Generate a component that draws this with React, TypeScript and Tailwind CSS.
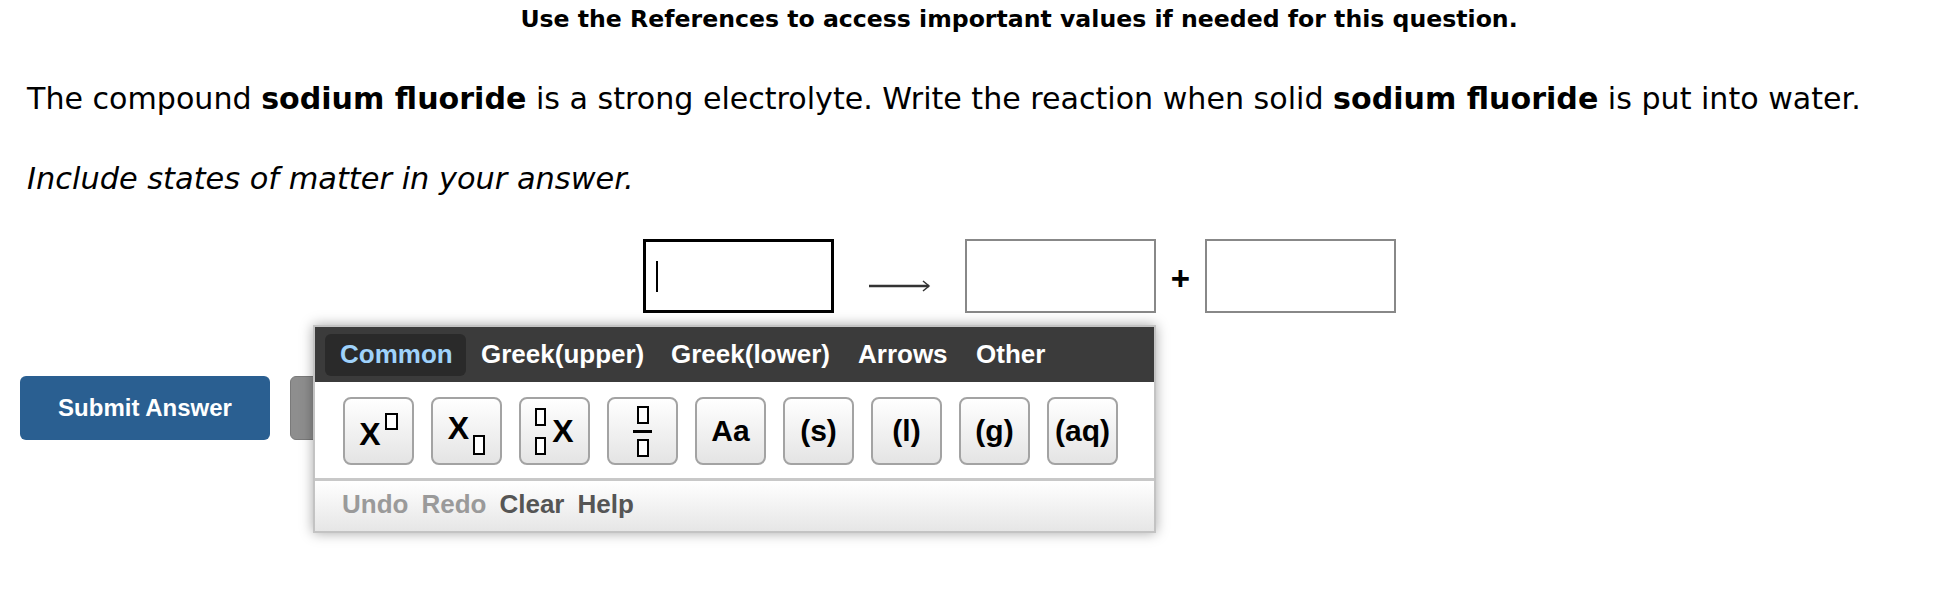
import React from "react";

function Box({ w = 12, h = 18 }: { w?: number; h?: number }) {
  return <span className="inline-block border-2 border-black bg-white" style={{ width: w, height: h }} />;
}

function PalBtn({ children }: { children: React.ReactNode }) {
  return (
    <div className="w-[71px] h-[68px] rounded-[8px] border-2 border-[#a3a3a3] bg-gradient-to-b from-white to-[#e4e4e4] flex items-center justify-center text-[30px] font-bold text-black leading-none">
      {children}
    </div>
  );
}

export default function App() {
  return (
    <div className="relative w-[1944px] h-[596px] bg-white overflow-hidden text-black">
      <div className="pt-[4px] pl-[94px] text-center font-['DejaVu_Sans',Verdana,sans-serif] font-bold text-[23.6px] leading-[30px]">
        Use the References to access important values if needed for this question.
      </div>
      <div className="mt-[45px] pl-[27px] font-['DejaVu_Sans',Verdana,sans-serif] text-[30.1px] leading-[40px] whitespace-nowrap">
        The compound <b>sodium fluoride</b> is a strong electrolyte. Write the reaction when solid <b>sodium fluoride</b> is put into water.
      </div>
      <div className="mt-[40px] pl-[27px] font-['DejaVu_Sans',Verdana,sans-serif] italic text-[30.4px] leading-[40px]">
        Include states of matter in your answer.
      </div>
      <div className="mt-[40px] pl-[643px] flex items-center">
        <div className="w-[191px] h-[74px] border-[3px] border-black flex items-center">
          <div className="ml-[10px] w-[2px] h-[31px] bg-black" />
        </div>
        <svg className="ml-[35px] mt-[20px]" width="62" height="14" viewBox="0 0 62 14">
          <line x1="0" y1="7" x2="60" y2="7" stroke="#333" strokeWidth="2.5" />
          <path d="M54 2 L60 7 L54 12" fill="none" stroke="#333" strokeWidth="1.5" />
        </svg>
        <div className="ml-[34px] w-[191px] h-[74px] border-2 border-[#888]" />
        <div className="w-[49px] mt-[4px] text-center font-['Liberation_Sans',Arial,sans-serif] font-bold text-[33px] leading-none">+</div>
        <div className="w-[191px] h-[74px] border-2 border-[#888]" />
      </div>
      <div className="mt-[63px] pl-[20px] flex gap-[20px] font-['Liberation_Sans',Arial,sans-serif]">
        <div className="w-[250px] h-[64px] rounded-[6px] bg-[#2a5f91] flex items-center justify-center text-white font-bold text-[24px]">
          Submit Answer
        </div>
        <div className="w-[200px] h-[64px] rounded-[6px] bg-[#8e8e8e] border border-[#7a7a7a]" />
      </div>

      <div className="absolute left-[313px] top-[325px] w-[843px] border-2 border-[#c3c3c3] bg-white shadow-[0_0_12px_rgba(0,0,0,0.35)] font-['Liberation_Sans',Arial,sans-serif]">
        <div className="h-[55px] bg-[#3b3b3b] flex items-center pl-[10px] text-[26px] font-bold text-white whitespace-nowrap">
          <div className="w-[141px] h-[42px] px-[15px] rounded-[6px] bg-[#2a2a2a] text-[#9fd2fb] flex items-center">Common</div>
          <div className="w-[190px] h-[42px] px-[15px] flex items-center">Greek(upper)</div>
          <div className="w-[187px] h-[42px] px-[15px] flex items-center">Greek(lower)</div>
          <div className="w-[118px] h-[42px] px-[15px] flex items-center">Arrows</div>
          <div className="h-[42px] px-[15px] flex items-center">Other</div>
        </div>
        <div className="pt-[15px] pb-[13px] pl-[28px] flex gap-[17px] border-b-[3px] border-[#c8c8c8]">
          <PalBtn>
            <span className="relative top-[3px] text-[32px]">X</span>
            <span className="relative -top-[10px] ml-[4px] flex"><Box w={13} h={17} /></span>
          </PalBtn>
          <PalBtn>
            <span className="relative -top-[3px] text-[32px]">X</span>
            <span className="relative top-[14px] ml-[4px] flex"><Box w={12} h={20} /></span>
          </PalBtn>
          <PalBtn>
            <span className="flex flex-col gap-[11px] mr-[6px]"><Box w={11} h={18} /><Box w={11} h={18} /></span>
            <span className="text-[32px]">X</span>
          </PalBtn>
          <PalBtn>
            <span className="flex flex-col items-center">
              <Box w={12} h={18} />
              <span className="block w-[19px] h-[3px] bg-black my-[6px]" />
              <Box w={12} h={18} />
            </span>
          </PalBtn>
          <PalBtn>Aa</PalBtn>
          <PalBtn>(s)</PalBtn>
          <PalBtn>(l)</PalBtn>
          <PalBtn>(g)</PalBtn>
          <PalBtn>(aq)</PalBtn>
        </div>
        <div className="h-[50px] pb-[3px] bg-gradient-to-b from-white to-[#e6e6e6] flex items-center pl-[27px] gap-[13px] text-[26px] font-bold">
          <span className="text-[#9a9a9a]">Undo</span>
          <span className="text-[#9a9a9a]">Redo</span>
          <span className="text-[#555]">Clear</span>
          <span className="text-[#555]">Help</span>
        </div>
      </div>
    </div>
  );
}
